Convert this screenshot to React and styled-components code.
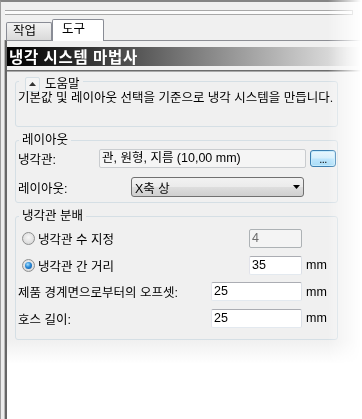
import React from 'react';
import styled, { createGlobalStyle } from 'styled-components';

const GlobalStyle = createGlobalStyle`
    html, body {
        margin: 0;
        padding: 0;
        background: #fff;
    }
    body {
        font-family: "Liberation Sans", "Noto Sans CJK KR", sans-serif;
        font-size: 12.5px;
        color: #000;
    }
`

function Radio({ checked }) {
    return <RadioCircle checked={checked}>{checked && <RadioDot />}</RadioCircle>;
}

function App() {
    return (
        <>
            <GlobalStyle />
            <Frame>
                <TopStrip>
                    <Grip />
                </TopStrip>

                <TabRow>
                    <Tab>작업</Tab>
                    <Tab active>도구</Tab>
                </TabRow>

                <TabPanel>
                    <TitleBar>냉각 시스템 마법사</TitleBar>
                    <Separator />

                    <Content>
                        <GroupBox top={9} bottom={21}>
                            <Legend offset={3}>
                                <Collapse>
                                    <svg width="7" height="4" viewBox="0 0 7 4">
                                        <polygon points="0,4 7,4 3.5,0" fill="#333" />
                                    </svg>
                                </Collapse>
                                도움말
                            </Legend>
                            <HelpText>기본값 및 레이아웃 선택을 기준으로 냉각 시스템을 만듭니다.</HelpText>
                        </GroupBox>

                        <GroupBox top={13} bottom={5}>
                            <Legend>레이아웃</Legend>
                            <Row gap={2} height={19}>
                                <Label>냉각관:</Label>
                                <ReadOnlyBox>관, 원형, 지름 (10,00 mm)</ReadOnlyBox>
                                <BrowseButton>...</BrowseButton>
                            </Row>
                            <Row gap={9} height={20}>
                                <Label>레이아웃:</Label>
                                <Combo>
                                    <span>X축 상</span>
                                    <svg width="7" height="4" viewBox="0 0 7 4">
                                        <polygon points="0,0 7,0 3.5,4" fill="#000" />
                                    </svg>
                                </Combo>
                            </Row>
                        </GroupBox>

                        <GroupBox top={13} bottom={11}>
                            <Legend>냉각관 분배</Legend>
                            <FieldGrid>
                                <RadioLabel>
                                    <Radio />
                                    냉각관 수 지정
                                </RadioLabel>
                                <Field width={53} disabled>4</Field>
                                <Unit />

                                <RadioLabel>
                                    <Radio checked />
                                    냉각관 간 거리
                                </RadioLabel>
                                <Field width={53}>35</Field>
                                <Unit>mm</Unit>

                                <Label>제품 경계면으로부터의 오프셋:</Label>
                                <Field width={91}>25</Field>
                                <Unit>mm</Unit>

                                <Label>호스 길이:</Label>
                                <Field width={91}>25</Field>
                                <Unit>mm</Unit>
                            </FieldGrid>
                        </GroupBox>
                    </Content>
                </TabPanel>
            </Frame>
        </>
    )
}

export default App;

const Frame = styled.div`
    width: 362px;
    height: 419px;
    box-sizing: border-box;
    border-left: 1px solid #9c9c9c;
    border-top: 2px solid #858585;
    background: #ececec;
    display: flex;
    flex-direction: column;
    overflow: hidden;
    -webkit-mask-image: linear-gradient(to right, #000 328px, rgba(0, 0, 0, 0) 361px);
    mask-image: linear-gradient(to right, #000 328px, rgba(0, 0, 0, 0) 361px);
`

const TopStrip = styled.div`
    height: 18px;
    box-sizing: border-box;
    padding: 8px 9px 0 4px;
    background: #f0f0f0;
`

const Grip = styled.div`
    height: 5px;
    box-sizing: border-box;
    border: 1px solid #a8a8a8;
    border-left: none;
    background: #fbfbfb;
`

const TabRow = styled.div`
    height: 20px;
    display: flex;
    align-items: flex-end;
    padding-left: 5px;
    background: #f0f0f0;
`

const Tab = styled.div`
    position: relative;
    z-index: ${p => p.active ? 1 : 0};
    box-sizing: border-box;
    width: ${p => p.active ? 52 : 46}px;
    height: ${p => p.active ? 22 : 18}px;
    margin-bottom: ${p => p.active ? -1 : 0}px;
    padding-left: ${p => p.active ? 9 : 6}px;
    line-height: ${p => p.active ? 18 : 17}px;
    font-size: 12.5px;
    border: 1px solid #898c95;
    border-bottom: none;
    border-radius: 2px 2px 0 0;
    background: ${p => p.active ? '#fff' : 'linear-gradient(#f3f3f3, #e6e6e6 50%, #d9d9d9)'};
`

const TabPanel = styled.div`
    flex: 1;
    margin-left: 4px;
    border-left: 2px solid #666;
    border-top: 1px solid #8c8e94;
    box-shadow: -1px 0 0 #b8b8b8;
    display: flex;
    flex-direction: column;
    background: #f0f0f0;
`

const TitleBar = styled.div`
    margin-top: 6px;
    height: 19px;
    padding-left: 2px;
    line-height: 19px;
    font-family: "Noto Sans CJK KR", sans-serif;
    font-weight: 700;
    font-size: 15.5px;
    letter-spacing: 0.8px;
    color: #fff;
    background: linear-gradient(to right, #000 0%, #0a0a0a 6%, #7c7c7c 52%, #d6d6d6 90%, #e4e4e4 100%);
    white-space: nowrap;
`

const Separator = styled.div`
    margin-top: 4px;
    height: 2px;
    box-sizing: border-box;
    border-top: 1px solid #6c6c6c;
    border-bottom: 1px solid #a9a9a9;
`

const Content = styled.div`
    flex: 1;
    padding-left: 8px;
    background: linear-gradient(to bottom, #f0f0f0 268px, #ffffff 292px);
`

const GroupBox = styled.div`
    width: 323px;
    box-sizing: border-box;
    margin-top: ${p => p.top}px;
    padding: 0 0 ${p => p.bottom}px 2px;
    border: 1px solid #d5dfe5;
    border-radius: 3px;
    display: flex;
    flex-direction: column;
`

const Legend = styled.div`
    align-self: flex-start;
    display: flex;
    align-items: center;
    height: 14px;
    line-height: 14px;
    margin: ${p => -8 + (p.offset || 0)}px 0 0 1px;
    padding: 0 3px;
    background: #f0f0f0;
`

const Collapse = styled.span`
    display: flex;
    align-items: center;
    justify-content: center;
    width: 15px;
    height: 15px;
    box-sizing: border-box;
    margin: 0 5px 0 3px;
    border: 1px solid #d5dfe5;
    border-radius: 2px;
    background: #f4f4f4;
`

const HelpText = styled.div`
    line-height: 14px;
    white-space: nowrap;
`

const Row = styled.div`
    display: flex;
    align-items: center;
    height: ${p => p.height}px;
    margin-top: ${p => p.gap}px;
    padding-right: 1px;
`

const Label = styled.div`
    flex: 1;
    white-space: nowrap;
`

const ReadOnlyBox = styled.div`
    width: 207px;
    height: 19px;
    box-sizing: border-box;
    padding-left: 2px;
    line-height: 17px;
    border: 1px solid #c9cccf;
    border-radius: 2px;
    background: #f5f5f5;
    white-space: nowrap;
`

const BrowseButton = styled.div`
    width: 26px;
    height: 17px;
    margin-left: 4px;
    box-sizing: border-box;
    border: 1px solid #3c7fb1;
    border-radius: 3px;
    box-shadow: inset 0 0 0 1px #c4ebfd;
    background: linear-gradient(#e8f6fd 0%, #d6effc 48%, #bee6fd 52%, #a9dcf6 100%);
    font-size: 11px;
    line-height: 17px;
    text-align: center;
    letter-spacing: -0.5px;
`

const Combo = styled.div`
    width: 173px;
    height: 20px;
    margin-right: 32px;
    box-sizing: border-box;
    display: flex;
    align-items: center;
    justify-content: space-between;
    padding: 0 3px 0 3px;
    border: 1px solid #707070;
    border-radius: 3px;
    background: linear-gradient(#f2f2f2 0%, #ebebeb 48%, #dddddd 52%, #cfcfcf 100%);
    white-space: nowrap;
`

const FieldGrid = styled.div`
    display: grid;
    grid-template-columns: 1fr auto 35px;
    grid-auto-rows: 19px;
    row-gap: 7.5px;
    align-items: center;
    margin-top: 6px;
`

const RadioLabel = styled.div`
    display: flex;
    align-items: center;
    gap: 3px;
    padding-left: 4px;
    white-space: nowrap;
`

const RadioCircle = styled.span`
    width: 13px;
    height: 13px;
    box-sizing: border-box;
    border-radius: 50%;
    border: 1px solid #8e8f8f;
    background: radial-gradient(circle at 50% 40%, #f6f6f6 0%, #e2e2e2 55%, #cfcfcf 100%);
    display: flex;
    align-items: center;
    justify-content: center;
`

const RadioDot = styled.span`
    width: 7px;
    height: 7px;
    border-radius: 50%;
    background: radial-gradient(circle at 40% 35%, #a6e0ff 0%, #2b8ad6 45%, #0c4f9c 100%);
`

const Field = styled.div`
    justify-self: end;
    width: ${p => p.width}px;
    height: 19px;
    box-sizing: border-box;
    padding-left: 2px;
    line-height: 17px;
    border: 1px solid;
    border-color: ${p => p.disabled ? '#adb2b5' : '#abadb3 #dbdfe6 #e3e9ef #e2e3ea'};
    border-radius: 2px;
    background: ${p => p.disabled ? '#f4f4f4' : '#fff'};
    color: ${p => p.disabled ? '#6d6d6d' : '#000'};
`

const Unit = styled.div`
    padding-left: 4px;
`
